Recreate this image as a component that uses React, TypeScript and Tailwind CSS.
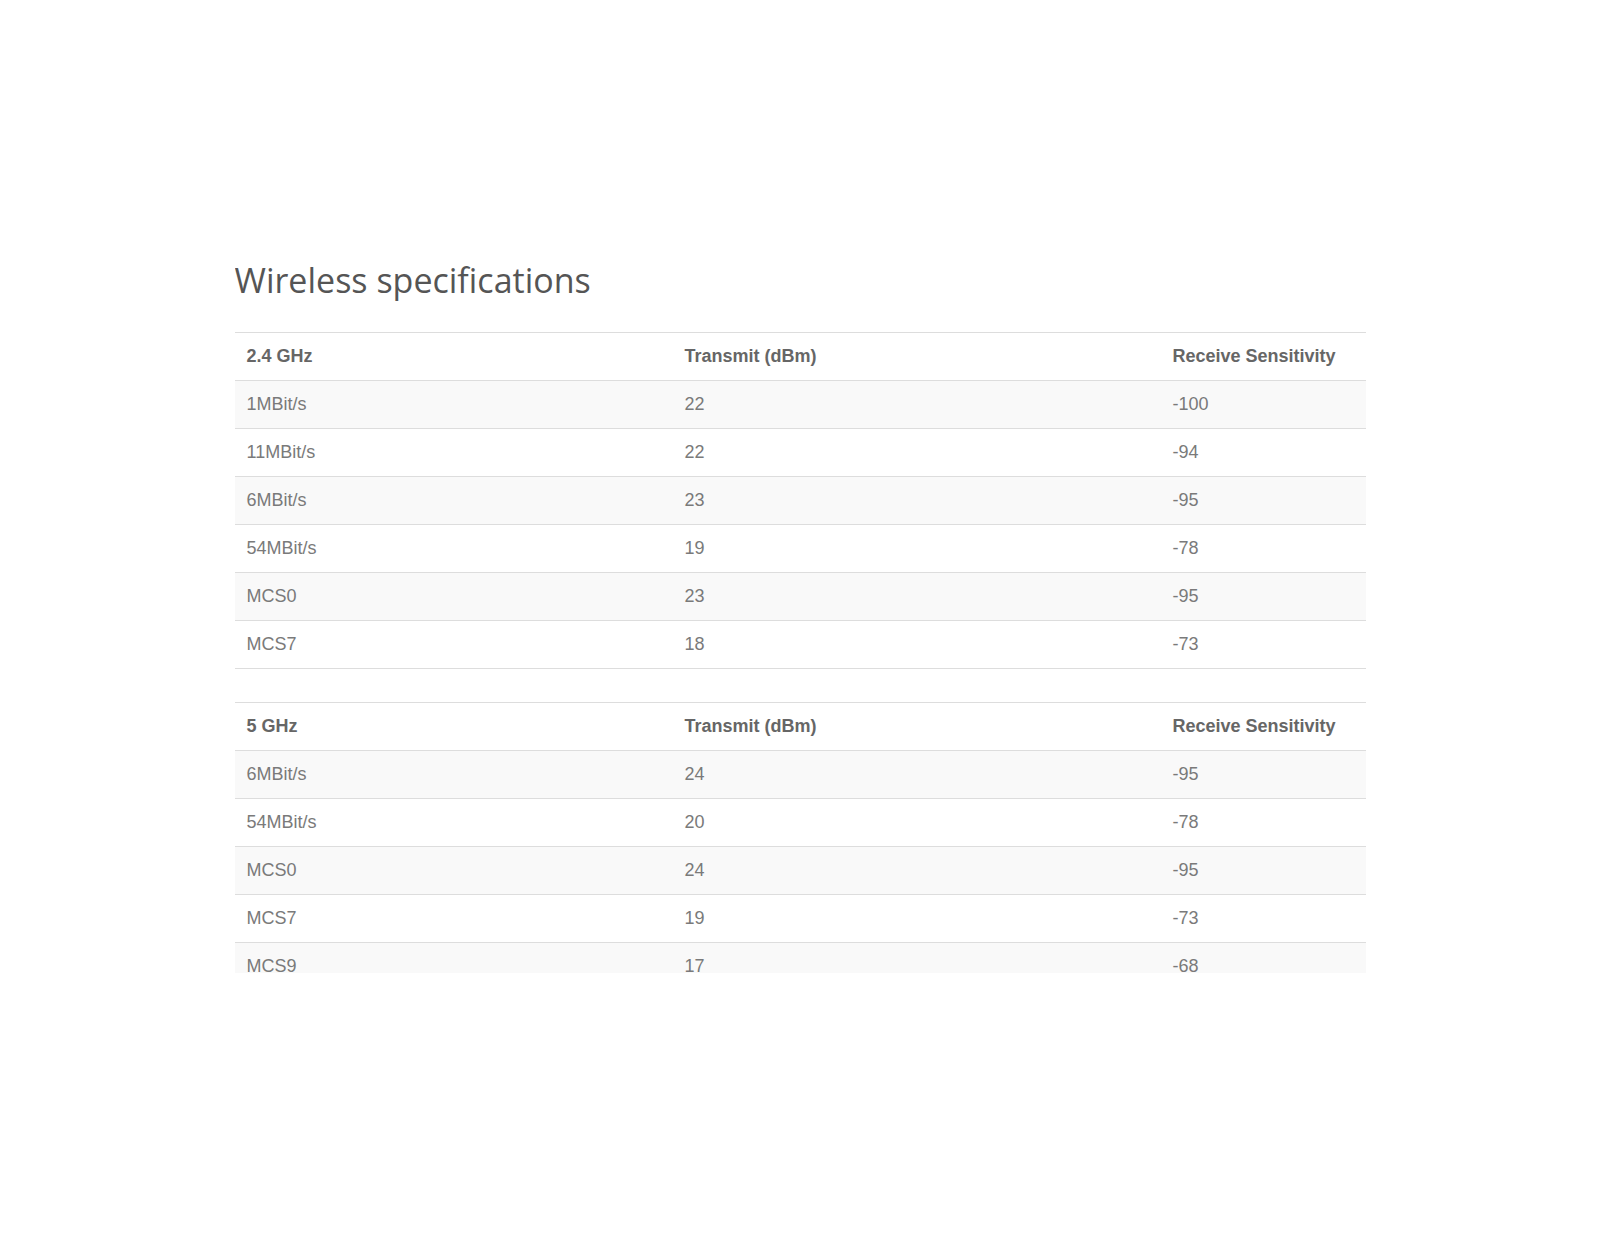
const bands = [
  {
    name: "2.4 GHz",
    rows: [
      ["1MBit/s", "22", "-100"],
      ["11MBit/s", "22", "-94"],
      ["6MBit/s", "23", "-95"],
      ["54MBit/s", "19", "-78"],
      ["MCS0", "23", "-95"],
      ["MCS7", "18", "-73"],
    ],
  },
  {
    name: "5 GHz",
    rows: [
      ["6MBit/s", "24", "-95"],
      ["54MBit/s", "20", "-78"],
      ["MCS0", "24", "-95"],
      ["MCS7", "19", "-73"],
      ["MCS9", "17", "-68"],
    ],
  },
];

function SpecTable({ name, rows }: { name: string; rows: string[][] }) {
  return (
    <table className="w-full border-collapse border-b border-[#dddddd] text-left text-[18px] leading-[23px] font-['Liberation_Sans',Arial,sans-serif]">
      <thead>
        <tr className="border-t border-[#dddddd]">
          <th className="w-[438px] px-3 py-3 font-bold text-[#666666]">{name}</th>
          <th className="w-[488px] px-3 py-3 font-bold text-[#666666]">Transmit (dBm)</th>
          <th className="px-3 py-3 font-bold text-[#666666]">Receive Sensitivity</th>
        </tr>
      </thead>
      <tbody>
        {rows.map((r, i) => (
          <tr
            key={r[0]}
            className={
              i % 2 === 0
                ? "border-t border-[#dddddd] bg-[#f9f9f9]"
                : "border-t border-[#dddddd] bg-white"
            }
          >
            <td className="px-3 py-3 text-[#7a7a7a]">{r[0]}</td>
            <td className="px-3 py-3 text-[#7a7a7a]">{r[1]}</td>
            <td className="px-3 py-3 text-[#7a7a7a]">{r[2]}</td>
          </tr>
        ))}
      </tbody>
    </table>
  );
}

export default function App() {
  return (
    <div className="min-h-[1241px] w-full bg-white">
      <div className="mx-auto h-[973px] w-[1131px] overflow-hidden pt-[262px]">
        <h2 className="text-[34px] leading-[36px] font-normal text-[#555555] font-['Open_Sans',sans-serif]">
          Wireless specifications
        </h2>
        <div className="mt-[34px]">
          <SpecTable name={bands[0].name} rows={bands[0].rows} />
        </div>
        <div className="mt-[33px]">
          <SpecTable name={bands[1].name} rows={bands[1].rows} />
        </div>
      </div>
    </div>
  );
}
